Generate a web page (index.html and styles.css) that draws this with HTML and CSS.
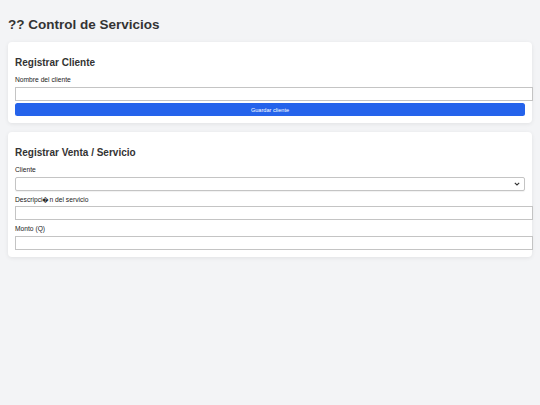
FILE: index.html
```html
<!DOCTYPE html>
<html lang="es">
<head>
    <meta charset="UTF-8">
    <meta name="viewport" content="width=device-width, initial-scale=1.0">
    <title>Control de Servicios</title>
    <link rel="stylesheet" href="styles.css">
</head>
<body>

<h1 class="title">?? Control de Servicios</h1>

<div class="card">
    <h2 class="card-title">Registrar Cliente</h2>
    <label class="label" for="nombre">Nombre del cliente</label>
    <input class="input" type="text" id="nombre">
    <button class="btn">Guardar cliente</button>
</div>

<div class="card">
    <h2 class="card-title">Registrar Venta / Servicio</h2>
    <div class="field">
        <label class="label" for="cliente">Cliente</label>
        <select class="select" id="cliente"></select>
    </div>
    <div class="field">
        <label class="label" for="descripcion">Descripci&#xFFFD;n del servicio</label>
        <input class="input" type="text" id="descripcion">
    </div>
    <div class="field">
        <label class="label" for="monto">Monto (Q)</label>
        <input class="input" type="text" id="monto">
    </div>
</div>

</body>
</html>
```

FILE: styles.css
```css
body {
    margin: 0;
    padding: 8px;
    background-color: #f3f4f6;
    font-family: "Liberation Sans", Arial, sans-serif;
    color: #333;
}
.title {
    font-size: 13.5px;
    line-height: 16px;
    margin: 9px 0;
}
.card {
    background-color: #fff;
    border-radius: 4px;
    padding: 7px;
    margin-bottom: 9px;
    box-shadow: 0 1px 4px rgba(0, 0, 0, 0.08);
}
.card-title {
    font-size: 10px;
    line-height: 12px;
    margin: 8px 0 7.4px;
}
.label {
    display: block;
    font-size: 6.7px;
    line-height: 7.7px;
    margin-bottom: 3px;
    color: #222;
}
.field {
    margin-bottom: 4.5px;
}
.field:last-child {
    margin-bottom: 0;
}
.input {
    display: block;
    width: 100%;
    height: 6px;
    padding: 3px;
    margin: 0;
    border: 1px solid #c4c4c4;
    font-size: 5.6px;
    font-family: inherit;
}
.select {
    display: block;
    width: 100%;
    height: 14px;
    margin: 0;
    padding: 0 3px;
    border: 1px solid #c4c4c4;
    border-radius: 2px;
    background: #fff url("data:image/svg+xml,%3Csvg xmlns='http://www.w3.org/2000/svg' width='6' height='4' viewBox='0 0 6 4'%3E%3Cpath d='M0.8 0.8 L3 3 L5.2 0.8' fill='none' stroke='%23333' stroke-width='1.1'/%3E%3C/svg%3E") no-repeat right 4px center;
    -webkit-appearance: none;
    appearance: none;
    box-shadow: 0 1px 1px rgba(0, 0, 0, 0.06);
    font-size: 5.6px;
    font-family: inherit;
}
.btn {
    display: block;
    width: 100%;
    height: 13px;
    margin-top: 2px;
    padding: 0;
    border: none;
    border-radius: 2.5px;
    background-color: #2563eb;
    color: #fff;
    font-size: 5.6px;
    font-family: inherit;
    cursor: pointer;
}
```
